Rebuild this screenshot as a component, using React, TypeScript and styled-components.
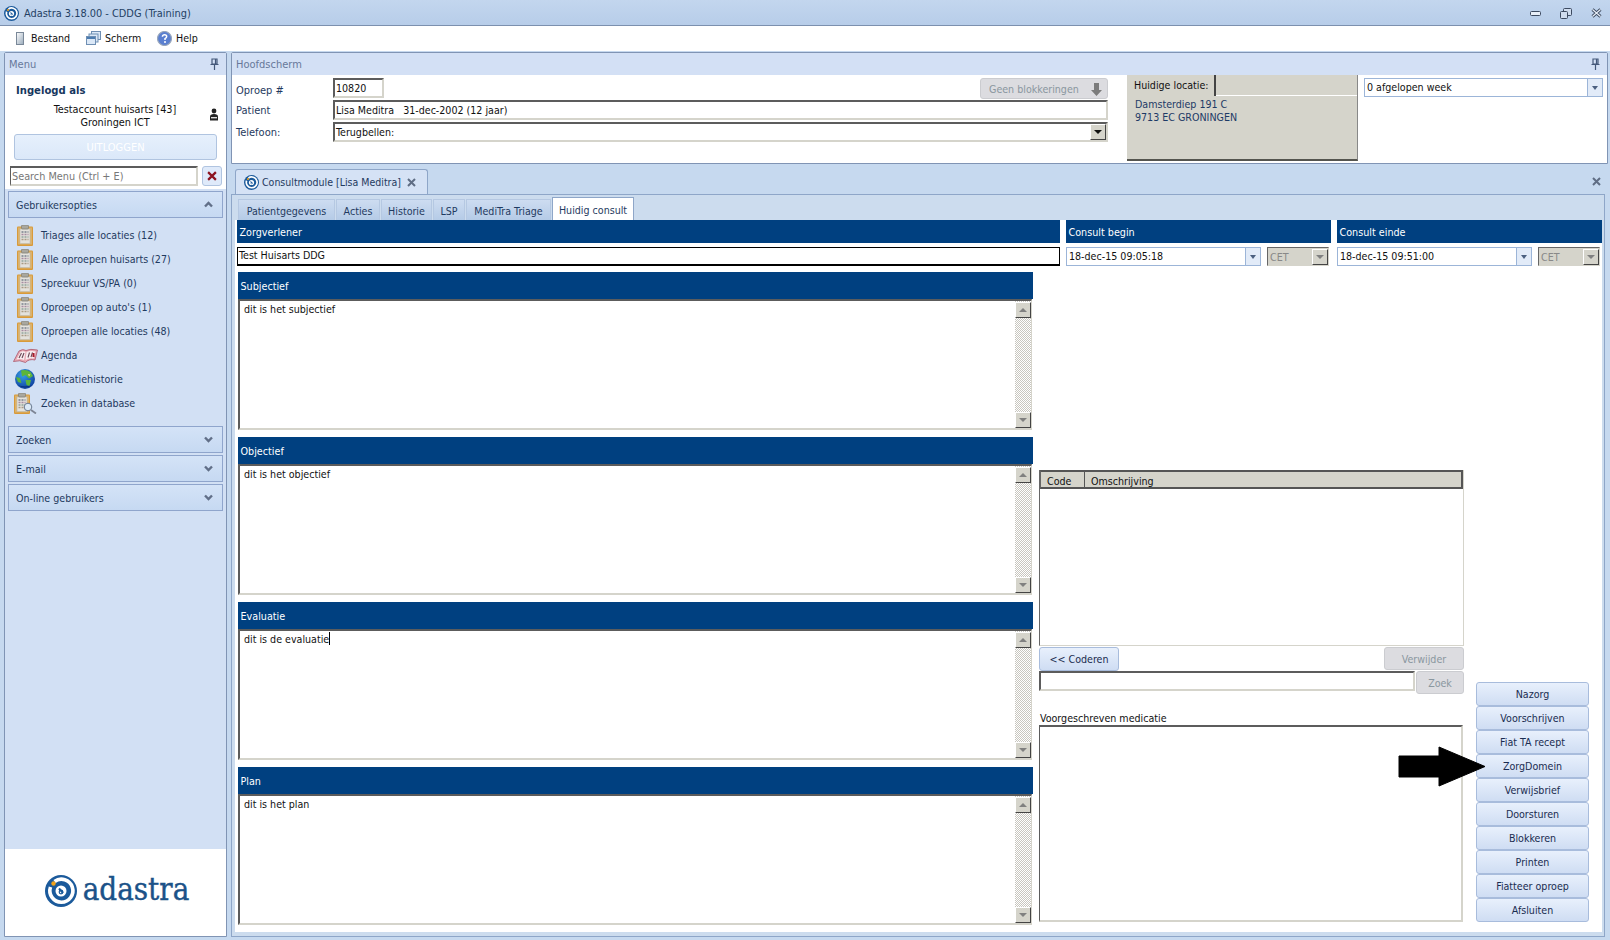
import React from "react";
import styled, { createGlobalStyle } from "styled-components";

const Global = createGlobalStyle`
  html, body { margin: 0; padding: 0; width: 1610px; height: 940px; overflow: hidden; }
  body { font-family: "DejaVu Sans Condensed", "Noto Sans", "Liberation Sans", sans-serif; font-size: 10.6px; color: #1b3358; }
  * { box-sizing: border-box; }
  svg { flex: none; }
`;

const Root = styled.div`
  position: relative; width: 1610px; height: 940px; display: flex; flex-direction: column;
  background: #c6d9ef; overflow: hidden;
`;
const TitleBar = styled.div`
  height: 26px; flex: none; display: flex; align-items: center; padding: 1px 8px 0 4px; gap: 5px;
  background: linear-gradient(#c3d6ee, #b7cde9); border-bottom: 1px solid #7c90ae; font-size: 10.9px; color: #243f63;
`;
const TitleText = styled.span` flex: 1; `;
const WinButtons = styled.div` display: flex; align-items: center; gap: 19px; `;
const MenuBar = styled.div`
  height: 25px; flex: none; background: #fff; display: flex; align-items: center; padding: 0 0 1px 16px; color: #111;
`;
const MenuItem = styled.div<{ $w: number }>`
  width: ${p => p.$w}px; display: flex; align-items: center; gap: 4px;
`;
const Body = styled.div` flex: 1; min-height: 0; display: flex; gap: 4px; padding: 1px 2px 3px 4px; `;

const SidePanel = styled.div`
  width: 223px; flex: none; display: flex; flex-direction: column; border: 1px solid #8094b4; border-radius: 2px 2px 0 0; background: #fff;
`;
const PanelHead = styled.div`
  height: 22px; flex: none; background: #d3e0f5; display: flex; align-items: center; justify-content: space-between;
  padding: 0 7px 0 4px; color: #67789a; font-size: 11px;
`;
const UserBox = styled.div` flex: none; height: 114px; padding: 9px 4px 0 5px; background: #fff; `;
const UserTitle = styled.div` font-weight: 700; font-size: 11.2px; line-height: 14px; color: #17375e; padding-left: 6px; `;
const UserLines = styled.div` position: relative; margin-top: 5px; height: 26px; text-align: center; line-height: 13px; color: #111; padding-right: 2px; font-size: 10.8px; `;
const UserIcon = styled.span` position: absolute; right: 3px; top: 5px; display: block; line-height: 0; `;
const LogoutBtn = styled.div`
  margin: 5px 5px 0 4px; height: 26px; border: 1px solid #b0c4e0; border-radius: 3px; background: linear-gradient(#e6f0fc, #dbe8f9);
  color: #fff; display: flex; align-items: center; justify-content: center; font-size: 11px;
`;
const SearchRow = styled.div` display: flex; gap: 4px; margin-top: 6px; height: 20px; `;
const SearchInput = styled.div`
  width: 188px; border: 2px solid; border-color: #5c5c5c #d5d4cb #d5d4cb #5c5c5c; border-left-width: 1px; background: #fff; color: #777;
  display: flex; align-items: center; padding-left: 1px; font-size: 10.8px;
`;
const ClearBtn = styled.div`
  width: 20px; border: 1px solid #b0c4e0; border-radius: 3px; background: #dfeafa; display: flex; align-items: center; justify-content: center;
`;
const Accordion = styled.div`
  flex: 1; min-height: 0; background: #d2e0f4; padding: 2px 3px 0 3px; display: flex; flex-direction: column;
`;
const AccHead = styled.div<{ $open?: boolean }>`
  flex: none; height: 27px; border: 1px solid #8fa5cc; background: linear-gradient(#d4e3f7, #c6d9f2);
  display: flex; align-items: center; justify-content: space-between; padding: 0 9px 0 7px; margin-bottom: ${p => (p.$open ? 5 : 2)}px;
  color: #1f3a60;
`;
const ItemList = styled.div` display: flex; flex-direction: column; margin-bottom: 11px; `;
const Item = styled.div`
  height: 24px; display: flex; align-items: center; color: #1f3a60; line-height: 1;
`;
const ItemIcon = styled.span` width: 33px; padding-left: 1px; display: flex; justify-content: center; line-height: 0; flex: none; `;
const LogoBox = styled.div` height: 87px; flex: none; background: #fff; display: flex; align-items: center; justify-content: center; gap: 6px; padding: 0 0 4px 3px; `;
const LogoWord = styled.span`
  font-family: "DejaVu Serif Condensed", "DejaVu Serif", serif; font-size: 31px; line-height: 1; color: #1b5288; -webkit-text-stroke: 0.4px #1b5288; margin-top: -3px;
`;

const MainCol = styled.div` flex: 1; min-width: 0; display: flex; flex-direction: column; `;
const TopPanel = styled.div` height: 112px; flex: none; border: 1px solid #8094b4; border-radius: 2px 2px 0 0; background: #fff; display: flex; flex-direction: column; `;
const TopBody = styled.div` flex: 1; display: flex; padding-left: 4px; `;
const FormArea = styled.div` width: 872px; flex: none; display: flex; flex-direction: column; padding-top: 3px; `;
const FormRow = styled.div<{ $h: number }>` height: ${p => p.$h}px; display: flex; align-items: center; margin-bottom: 2px; `;
const FormLabel = styled.div<{ $drop?: number }>` width: 97px; flex: none; color: #1f3a60; font-size: 11px; padding-top: ${p => p.$drop ?? 0}px; `;
const Sunken = styled.div<{ $w?: number }>`
  ${p => (p.$w ? `width:${p.$w}px;flex:none;` : "flex:1;")} height: 100%; border: 2px solid; border-color: #5c5c5c #d5d4cb #d5d4cb #5c5c5c;
  background: #fff; color: #111; display: flex; align-items: center; padding-left: 1px; justify-content: space-between; min-width: 0;
`;
const BlockBtn = styled.div`
  width: 128px; flex: none; margin-left: auto; height: 21px; border: 1px solid #cbccd0; border-radius: 3px; background: #dcdce0; color: #8a979f;
  display: flex; align-items: center; justify-content: space-between; padding: 2px 5px 0 8px;
`;
const LocationBox = styled.div`
  width: 231px; flex: none; margin-left: 19px; height: 86px; background: #d5d4cb; border-bottom: 2px solid #55554f; border-right: 1px solid #888; display: flex; flex-direction: column; color: #1d3a66;
`;
const LocTabs = styled.div` height: 21px; flex: none; display: flex; `;
const LocTab = styled.div` width: 89px; border-right: 2px solid #444; display: flex; align-items: center; padding: 0 0 1px 7px; color: #111; `;
const LocBlank = styled.div` flex: 1; border-bottom: 1px solid #fff; `;
const LocText = styled.div` padding: 2px 0 0 8px; line-height: 13px; `;
const WeekWrap = styled.div` width: 239px; margin-left: 6px; padding-top: 3px; flex: none; `;
const BlueCombo = styled.div<{ $h?: number }>`
  height: ${p => p.$h ?? 19}px; border: 1px solid #9cb5d8; background: #fff; display: flex; align-items: stretch; justify-content: space-between; color: #111; padding-left: 2px; min-width: 0;
`;
const ComboText = styled.span` align-self: center; margin-top: -1px; `;
const ComboBtn = styled.span`
  width: 15px; flex: none; border-left: 1px solid #9cb5d8; background: #e2ebf8; display: flex; align-items: center; justify-content: center;
`;
const SmallTri = styled.span` width: 0; height: 0; border: 3px solid transparent; border-top: 4px solid #4c6080; border-bottom: 0; `;
const ClassicBtn = styled.span`
  width: 16px; height: 16px; flex: none; background: #d5d4cb; border: 1px solid; border-color: #fff #444 #444 #fff;
  display: flex; align-items: center; justify-content: center;
`;
const TriDown = styled.span<{ $c?: string }>` width: 0; height: 0; border: 4px solid transparent; border-top: 4px solid ${p => p.$c ?? "#111"}; border-bottom: 0; `;
const TriUp = styled.span` width: 0; height: 0; border: 4px solid transparent; border-bottom: 4px solid #808080; border-top: 0; `;

const TabStrip = styled.div` height: 30px; flex: none; display: flex; align-items: flex-end; justify-content: space-between; padding: 0 7px 0 4px; `;
const ConsultTab = styled.div`
  width: 193px; height: 25px; border: 1px solid #8ea6c8; border-bottom: 0; border-radius: 3px 3px 0 0; background: #d5e2f5; color: #1f3a60;
  display: flex; align-items: center; padding: 0 11px 0 8px; gap: 3px; font-size: 10.5px;
`;
const ConsultTabText = styled.span` flex: 1; white-space: nowrap; `;
const StripClose = styled.span` align-self: center; line-height: 0; margin-top: 4px; `;
const ConsultPanel = styled.div`
  flex: 1; min-height: 0; width: 1374px; border: 1px solid #8ea6c8; background: #ccdcee; padding: 4px 2px 4px 3px; display: flex; flex-direction: column;
`;
const InnerTabs = styled.div` height: 21px; flex: none; display: flex; align-items: flex-end; gap: 1px; padding-left: 3px; `;
const InnerTab = styled.div<{ $active?: boolean; $w: number }>`
  width: ${p => p.$w}px; height: ${p => (p.$active ? 23 : 21)}px; flex: none; display: flex; align-items: center; justify-content: center; padding-top: 1px;
  background: ${p => (p.$active ? "#fff" : "linear-gradient(#cddcf1, #b5cbe7)")}; border: 1px solid ${p => (p.$active ? "#8ea6c8" : "#b5c8e2")}; border-bottom: 0;
  color: #1f3a60; white-space: nowrap; font-size: 10.6px;
`;
const Plate = styled.div` flex: 1; min-height: 0; background: #fff; display: flex; flex-direction: column; padding-left: 2px; `;
const TopGrid = styled.div` flex: none; display: grid; grid-template-columns: 823px 265px 265px; column-gap: 6px; row-gap: 4px; grid-template-rows: 23px 19px; `;
const BlueHead = styled.div<{ $h?: number }>`
  background: #004080; color: #fff; display: flex; align-items: center; padding: 1px 0 0 2.5px; font-size: 10.7px; ${p => (p.$h ? `height:${p.$h}px;flex:none;` : "")}
`;
const PlainField = styled.div` border: 1px solid #000; border-width: 1px 1px 2px 1px; display: flex; align-items: center; padding-left: 1px; color: #111; padding-bottom: 2px; `;
const DateCell = styled.div` display: flex; gap: 6px; `;
const DateCombo = styled(BlueCombo)` width: 195px; flex: none; `;
const CetCombo = styled.div`
  width: 62px; flex: none; background: #d5d4cb; border: 1px solid; border-color: #666 #d5d4cb #d5d4cb #666; color: #888; display: flex; align-items: center; justify-content: space-between; padding-left: 2px;
`;
const Work = styled.div` flex: 1; min-height: 0; display: flex; padding: 6px 0 0 1px; `;
const Soap = styled.div` width: 795px; flex: none; display: flex; flex-direction: column; gap: 7px; `;
const SoapBlock = styled.section` display: flex; flex-direction: column; `;
const NoteBox = styled.div<{ $h: number }>`
  height: ${p => p.$h}px; margin-right: 1px; border: 2px solid; border-right-width: 1px; border-color: #5c5c5c #d5d4cb #d5d4cb #5c5c5c; background: #fff; display: flex; color: #111;
`;
const NoteText = styled.div` flex: 1; padding: 1px 4px; line-height: 14px; `;
const Caret = styled.span` display: inline-block; width: 1px; height: 13px; background: #000; vertical-align: -2px; `;
const ScrollBar = styled.div`
  width: 16px; flex: none; display: flex; flex-direction: column; justify-content: space-between; padding-top: 1px;
  background: repeating-conic-gradient(#fff 0 25%, #c8c6bf 0 50%) 0 0 / 2px 2px;
`;
const RightCol = styled.div` width: 425px; flex: none; margin-left: 6px; padding-top: 198px; display: flex; flex-direction: column; `;
const CodeTable = styled.div` height: 176px; flex: none; border: 1px solid #d5d4cb; border-top: 0; border-left: 1px solid #666; background: #fff; `;
const CodeHead = styled.div`
  height: 19px; background: #d5d4cb; border: 2px solid; border-color: #555 #555 #555 #666; border-left-width: 1px; display: flex; color: #111; align-items: center;
`;
const CodeCol = styled.div<{ $w?: number }>` ${p => (p.$w ? `width:${p.$w}px;border-right:1px solid #555;` : "flex:1;")} height: 100%; display: flex; align-items: center; padding: 2px 0 0 6px; `;
const ActionRow = styled.div` height: 24px; flex: none; margin-top: 1px; display: flex; justify-content: space-between; align-items: flex-start; `;
const SoftBtn = styled.div<{ $w?: number; $h?: number; $off?: boolean }>`
  ${p => (p.$w ? `width:${p.$w}px;` : "")} height: ${p => p.$h ?? 24}px; flex: none; border-radius: 3px; display: flex; align-items: center; justify-content: center;
  border: 1px solid ${p => (p.$off ? "#cbccd0" : "#a8bcdc")}; color: ${p => (p.$off ? "#8a979f" : "#1a2c50")};
  background: ${p => (p.$off ? "#dcdce0" : "linear-gradient(#e8f0fc, #cfddf3)")}; white-space: nowrap;
`;
const SearchLine = styled.div` height: 23px; flex: none; display: flex; justify-content: space-between; align-items: flex-start; `;
const SearchField = styled(Sunken)` flex: none; width: 376px; height: 20px; `;
const MedLabel = styled.div` margin-top: 18px; height: 13px; line-height: 13px; color: #111; padding-left: 1px; flex: none; `;
const MedBox = styled.div` width: 424px; height: 197px; flex: none; border: 2px solid; border-color: #5c5c5c #d5d4cb #d5d4cb #5c5c5c; border-left-width: 1px; background: #fff; `;
const ActionCol = styled.div` width: 113px; flex: none; margin-left: 12px; display: flex; flex-direction: column; justify-content: flex-end; padding-bottom: 10px; `;
const Arrow = styled.svg` position: absolute; left: 1398px; top: 746px; `;

const Mark = ({ size = 32 }: { size?: number }) => (
  <svg width={size} height={size} viewBox="0 0 32 32">
    <circle cx="16" cy="16" r="16" fill="#1b5a9b" />
    <path d="M9.5 6.5 A11.5 11.5 0 1 1 5.5 12" fill="none" stroke="#fff" strokeWidth="3.600" />
    <circle cx="16" cy="16" r="5.500" fill="#fff" />
    <path d="M14 13.500 L18 18" stroke="#1b5a9b" strokeWidth="2" />
    <circle cx="16" cy="17" r="1.800" fill="none" stroke="#1b5a9b" strokeWidth="1.200" />
    <circle cx="8.500" cy="8.500" r="2.200" fill="#f2a31b" />
  </svg>
);
const Pin = () => (
  <svg width="9" height="12" viewBox="0 0 9 12"><path d="M2 1h5v5H2zM5.500 1v5M0.500 6.500h8M4.500 7v5" fill="none" stroke="#44587a" strokeWidth="1.200" /></svg>
);
const Chevron = ({ up }: { up?: boolean }) => (
  <svg width="9" height="7" viewBox="0 0 9 7"><path d={up ? "M1 5.500l3.500-3.500L8 5.500" : "M1 1.500l3.500 3.500L8 1.500"} fill="none" stroke="#616f88" strokeWidth="2.400" /></svg>
);
const Clipboard = ({ lens }: { lens?: boolean }) => (
  <svg width={lens ? 23 : 16} height="21" viewBox={lens ? "0 0 23 21" : "0 0 16 21"}>
    <rect x="0" y="1.500" width="16" height="19.500" rx="1" fill="#d89a3a" />
    <rect x="1" y="2.500" width="14" height="17" fill="#dcb26a" />
    <rect x="3" y="4" width="10" height="14.500" fill="#e4e2dc" stroke="#bdb9ae" strokeWidth=".6" />
    <rect x="4.500" y="0" width="7" height="4" rx="1" fill="#a9a79e" stroke="#77756c" strokeWidth=".6" />
    <path d="M4.500 7h7" stroke="#77808c" strokeWidth="1.300" strokeDasharray="2 1" />
    <path d="M4.500 9.500h7" stroke="#a58ba0" strokeWidth="1.300" strokeDasharray="2 1" />
    <path d="M4.500 12h7" stroke="#8fa39a" strokeWidth="1.300" strokeDasharray="2 1" />
    <path d="M4.500 14.500h7" stroke="#a99a84" strokeWidth="1.300" strokeDasharray="2 1" />
    {lens && <>
      <circle cx="14" cy="14" r="3.800" fill="#dbe9f6" stroke="#69798f" />
      <path d="M17 17l5 3.500" stroke="#7d8494" strokeWidth="1.800" />
    </>}
  </svg>
);
const BookIcon = () => (
  <svg width="25" height="15" viewBox="0 0 25 15">
    <path d="M0.500 13.500 L6 3 Q10 0.500 13 2.500 Q17 0.500 24.500 2 L22 12 Q16 10.500 12.500 14.500 Q7 11.500 0.500 13.500Z" fill="#e9a9b4" stroke="#a8566a" strokeWidth=".8" />
    <path d="M3.500 11.500 L7.500 4 Q10 2.500 12.500 4 L11 12 Q7 10.500 3.500 11.500Z M13.500 4 Q17 2.500 22.500 3.500 L20.500 10.500 Q16 9.500 12.500 12Z" fill="#f8eef0" />
    <path d="M6 10L8.500 5M9 10L11 5M15 9.500L16.500 4.500M18 9L19.500 4.500" stroke="#6a4654" strokeWidth="1.100" />
    <rect x="19.500" y="5" width="2" height="4" fill="#a81c2a" />
  </svg>
);
const Globe = () => (
  <svg width="20" height="20" viewBox="0 0 20 20">
    <defs><radialGradient id="gl" cx=".4" cy=".3" r=".75"><stop offset="0" stopColor="#38a0e6" /><stop offset="1" stopColor="#0d3c9c" /></radialGradient></defs>
    <circle cx="10" cy="10" r="10" fill="url(#gl)" />
    <path d="M6 1.500 Q11 0 15.500 3 L18 7 L14 9.500 L10.500 6 L7 7.500 Z M10.500 11 L16 11 L14.500 17 L11.500 16 Z M1 8 L5 9 L6.500 14 L3 13 Z" fill="#5cb53a" />
    <path d="M13 5l2.500.5L14 7.500z" fill="#e8d98a" />
    <path d="M3 16 Q10 21 17 16 Q10 19 3 16Z" fill="#082a70" />
  </svg>
);
const UserGlyph = () => (
  <svg width="10" height="13" viewBox="0 0 10 13">
    <circle cx="5" cy="3" r="2.400" fill="#222" />
    <path d="M1 12.500V8.500Q1 6 5 6Q9 6 9 8.500V12.500Z" fill="#222" />
    <rect x="2" y="9" width="6" height="1.400" fill="#ddd" />
  </svg>
);
const DocIcon = () => (
  <svg width="8" height="13" viewBox="0 0 8 13"><defs><linearGradient id="d" x1="0" y1="0" x2="1" y2="1"><stop offset="0" stopColor="#fff" /><stop offset="1" stopColor="#9ab" /></linearGradient></defs><rect x=".5" y=".5" width="7" height="12" fill="url(#d)" stroke="#7a8898" /></svg>
);
const WindowsIcon = () => (
  <svg width="15" height="14" viewBox="0 0 15 14" fill="#dbe8f7" stroke="#6f8fb3"><rect x="5.500" y=".5" width="9" height="8" /><rect x="3" y="3" width="9" height="8" /><rect x=".5" y="5.500" width="9" height="8" /><path d="M1 7h8" stroke="#4c7cb0" strokeWidth="2" /></svg>
);
const HelpIcon = () => (
  <svg width="15" height="15" viewBox="0 0 15 15"><circle cx="7.500" cy="7.500" r="7" fill="#5a7fd0" stroke="#9aa8bc" strokeWidth="1.200" /><path d="M5.400 5.800Q5.600 3.800 7.600 3.800Q9.700 3.800 9.700 5.600Q9.700 6.800 8 7.600V9" fill="none" stroke="#fff" strokeWidth="1.500" /><circle cx="8" cy="11" r="1" fill="#fff" /></svg>
);
const CrossIcon = ({ c = "#5f6d84", s = 9, w = 2 }: { c?: string; s?: number; w?: number }) => (
  <svg width={s} height={s} viewBox="0 0 9 9"><path d="M1 1l7 7M8 1l-7 7" stroke={c} strokeWidth={w} /></svg>
);
const WinControls = () => (
  <WinButtons>
    <svg width="11" height="5" viewBox="0 0 11 5"><rect x=".5" y=".5" width="10" height="4" rx="1" fill="#e8eff8" stroke="#3c4a60" /></svg>
    <svg width="12" height="11" viewBox="0 0 12 11" fill="#cfdcee" stroke="#3c4a60"><rect x="3.500" y=".5" width="8" height="7" rx="1" /><rect x=".5" y="3.500" width="7" height="7" rx="1" /></svg>
    <svg width="11" height="10" viewBox="0 0 11 10"><path d="M1.500 1.500l8 7M9.500 1.500l-8 7" stroke="#3c4a60" strokeWidth="3" /><path d="M1.500 1.500l8 7M9.500 1.500l-8 7" stroke="#e8eff8" strokeWidth="1.200" /></svg>
  </WinButtons>
);

const menuItems: { t: string; icon: React.ReactNode }[] = [
  { t: "Triages alle locaties (12)", icon: <Clipboard /> },
  { t: "Alle oproepen huisarts (27)", icon: <Clipboard /> },
  { t: "Spreekuur VS/PA (0)", icon: <Clipboard /> },
  { t: "Oproepen op auto's (1)", icon: <Clipboard /> },
  { t: "Oproepen alle locaties (48)", icon: <Clipboard /> },
  { t: "Agenda", icon: <BookIcon /> },
  { t: "Medicatiehistorie", icon: <Globe /> },
  { t: "Zoeken in database", icon: <Clipboard lens /> },
];
const innerTabs = [
  { t: "Patientgegevens", w: 97 }, { t: "Acties", w: 44 }, { t: "Historie", w: 51 }, { t: "LSP", w: 32 }, { t: "MediTra Triage", w: 85 },
];
const soap: { t: string; b: React.ReactNode }[] = [
  { t: "Subjectief", b: "dit is het subjectief" },
  { t: "Objectief", b: "dit is het objectief" },
  { t: "Evaluatie", b: <>dit is de evaluatie<Caret /></> },
  { t: "Plan", b: "dit is het plan" },
];
const actions = ["Nazorg", "Voorschrijven", "Fiat TA recept", "ZorgDomein", "Verwijsbrief", "Doorsturen", "Blokkeren", "Printen", "Fiatteer oproep", "Afsluiten"];

export default function App() {
  return (
    <Root>
      <Global />
      <TitleBar>
        <Mark size={15} />
        <TitleText>Adastra 3.18.00 - CDDG (Training)</TitleText>
        <WinControls />
      </TitleBar>
      <MenuBar>
        <MenuItem $w={70}><DocIcon /><span>&nbsp;Bestand</span></MenuItem>
        <MenuItem $w={71}><WindowsIcon /><span>Scherm</span></MenuItem>
        <MenuItem $w={60}><HelpIcon /><span>Help</span></MenuItem>
      </MenuBar>
      <Body>
        <SidePanel>
          <PanelHead><span>Menu</span><Pin /></PanelHead>
          <UserBox>
            <UserTitle>Ingelogd als</UserTitle>
            <UserLines>
              Testaccount huisarts [43]<br />Groningen ICT
              <UserIcon><UserGlyph /></UserIcon>
            </UserLines>
            <LogoutBtn>UITLOGGEN</LogoutBtn>
            <SearchRow>
              <SearchInput>Search Menu (Ctrl + E)</SearchInput>
              <ClearBtn><CrossIcon c="#8c1420" s={10} /></ClearBtn>
            </SearchRow>
          </UserBox>
          <Accordion>
            <AccHead $open><span>Gebruikersopties</span><Chevron up /></AccHead>
            <ItemList>
              {menuItems.map(m => (
                <Item key={m.t}><ItemIcon>{m.icon}</ItemIcon><span>{m.t}</span></Item>
              ))}
            </ItemList>
            <AccHead><span>Zoeken</span><Chevron /></AccHead>
            <AccHead><span>E-mail</span><Chevron /></AccHead>
            <AccHead><span>On-line gebruikers</span><Chevron /></AccHead>
          </Accordion>
          <LogoBox><Mark /><LogoWord>adastra</LogoWord></LogoBox>
        </SidePanel>
        <MainCol>
          <TopPanel>
            <PanelHead><span>Hoofdscherm</span><Pin /></PanelHead>
            <TopBody>
              <FormArea>
                <FormRow $h={20}>
                  <FormLabel $drop={4}>Oproep #</FormLabel>
                  <Sunken $w={51}>10820</Sunken>
                  <BlockBtn><span>Geen blokkeringen</span>
                    <svg width="11" height="13" viewBox="0 0 11 13"><path d="M3 0h5v7h3l-5.500 6L0 7h3z" fill="#7c7c7c" /></svg>
                  </BlockBtn>
                </FormRow>
                <FormRow $h={20}><FormLabel>Patient</FormLabel><Sunken>Lisa Meditra&nbsp;&nbsp; 31-dec-2002 (12 jaar)</Sunken></FormRow>
                <FormRow $h={20}><FormLabel>Telefoon:</FormLabel><Sunken>Terugbellen:<ClassicBtn><TriDown /></ClassicBtn></Sunken></FormRow>
              </FormArea>
              <LocationBox>
                <LocTabs><LocTab>Huidige locatie:</LocTab><LocBlank /></LocTabs>
                <LocText>Damsterdiep 191 C<br />9713 EC GRONINGEN</LocText>
              </LocationBox>
              <WeekWrap>
                <BlueCombo><ComboText>0 afgelopen week</ComboText><ComboBtn><SmallTri /></ComboBtn></BlueCombo>
              </WeekWrap>
            </TopBody>
          </TopPanel>
          <TabStrip>
            <ConsultTab><Mark size={15} /><ConsultTabText>Consultmodule [Lisa Meditra]</ConsultTabText><CrossIcon /></ConsultTab>
            <StripClose><CrossIcon s={9} /></StripClose>
          </TabStrip>
          <ConsultPanel>
            <InnerTabs>
              {innerTabs.map(t => <InnerTab key={t.t} $w={t.w}>{t.t}</InnerTab>)}
              <InnerTab $active $w={82}>Huidig consult</InnerTab>
            </InnerTabs>
            <Plate>
              <TopGrid>
                <BlueHead>Zorgverlener</BlueHead>
                <BlueHead>Consult begin</BlueHead>
                <BlueHead>Consult einde</BlueHead>
                <PlainField>Test Huisarts DDG</PlainField>
                <DateCell>
                  <DateCombo><ComboText>18-dec-15 09:05:18</ComboText><ComboBtn><SmallTri /></ComboBtn></DateCombo>
                  <CetCombo>CET<ClassicBtn><TriDown $c="#808080" /></ClassicBtn></CetCombo>
                </DateCell>
                <DateCell>
                  <DateCombo><ComboText>18-dec-15 09:51:00</ComboText><ComboBtn><SmallTri /></ComboBtn></DateCombo>
                  <CetCombo>CET<ClassicBtn><TriDown $c="#808080" /></ClassicBtn></CetCombo>
                </DateCell>
              </TopGrid>
              <Work>
                <Soap>
                  {soap.map(s => (
                    <SoapBlock key={s.t}>
                      <BlueHead $h={27}>{s.t}</BlueHead>
                      <NoteBox $h={131}>
                        <NoteText>{s.b}</NoteText>
                        <ScrollBar>
                          <ClassicBtn><TriUp /></ClassicBtn>
                          <ClassicBtn><TriDown $c="#808080" /></ClassicBtn>
                        </ScrollBar>
                      </NoteBox>
                    </SoapBlock>
                  ))}
                </Soap>
                <RightCol>
                  <CodeTable>
                    <CodeHead><CodeCol $w={44}>Code</CodeCol><CodeCol>Omschrijving</CodeCol></CodeHead>
                  </CodeTable>
                  <ActionRow>
                    <SoftBtn $w={80}>&lt;&lt; Coderen</SoftBtn>
                    <SoftBtn $w={80} $h={23} $off>Verwijder</SoftBtn>
                  </ActionRow>
                  <SearchLine>
                    <SearchField />
                    <SoftBtn $w={48} $h={23} $off>Zoek</SoftBtn>
                  </SearchLine>
                  <MedLabel>Voorgeschreven medicatie</MedLabel>
                  <MedBox />
                </RightCol>
                <ActionCol>
                  {actions.map(a => <SoftBtn key={a}>{a}</SoftBtn>)}
                </ActionCol>
              </Work>
            </Plate>
          </ConsultPanel>
        </MainCol>
      </Body>
      <Arrow width="88" height="41" viewBox="0 0 88 41"><path d="M1 10H41V1L87 20.500L41 40V31H1Z" fill="#000" stroke="#000" strokeLinejoin="round" /></Arrow>
    </Root>
  );
}
